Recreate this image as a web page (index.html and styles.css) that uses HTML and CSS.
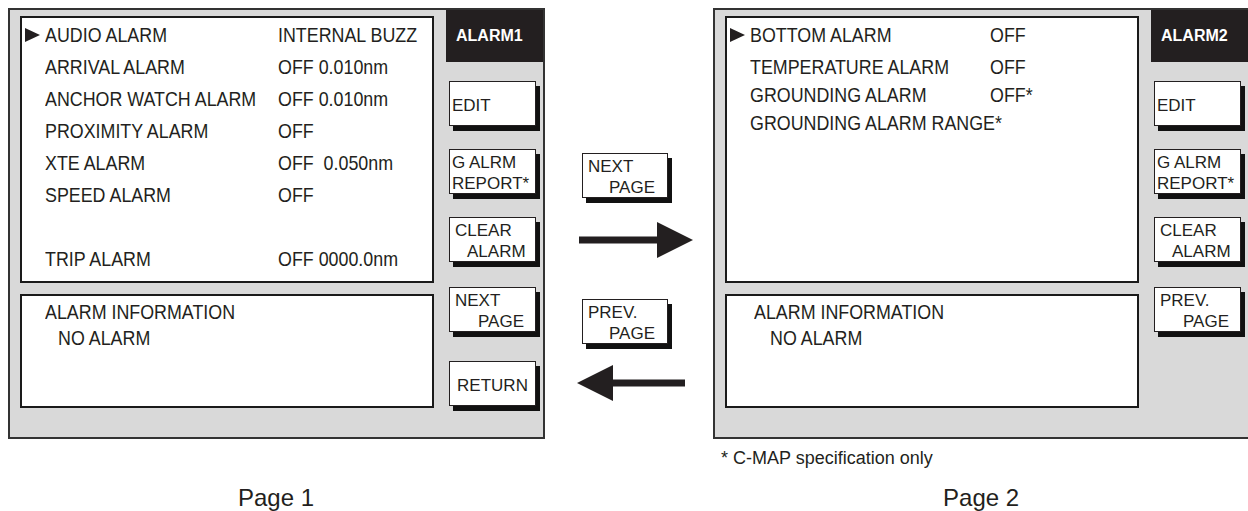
FILE: index.html
```html
<!DOCTYPE html>
<html lang="en">
  <head>
    <meta charset="UTF-8" />
    <title>Alarm menu</title>
    <link rel="stylesheet" href="styles.css">
  </head>
  <body>
    <div class="top">
      <!-- page 1 -->
      <div class="screen">
        <div class="panels">
          <div class="panel list">
            <div class="row"><span class="mark"><svg width="15" height="14" viewBox="0 0 15 14"><polygon points="0,0 15,7 0,14" fill="#231f20"/></svg></span><span class="label">AUDIO ALARM</span><span class="value">INTERNAL BUZZ</span></div>
            <div class="row"><span class="mark"></span><span class="label">ARRIVAL ALARM</span><span class="value">OFF 0.010nm</span></div>
            <div class="row"><span class="mark"></span><span class="label">ANCHOR WATCH ALARM</span><span class="value">OFF 0.010nm</span></div>
            <div class="row"><span class="mark"></span><span class="label">PROXIMITY ALARM</span><span class="value">OFF</span></div>
            <div class="row"><span class="mark"></span><span class="label">XTE ALARM</span><span class="value">OFF  0.050nm</span></div>
            <div class="row"><span class="mark"></span><span class="label">SPEED ALARM</span><span class="value">OFF</span></div>
            <div class="row"></div>
            <div class="row"><span class="mark"></span><span class="label">TRIP ALARM</span><span class="value">OFF 0000.0nm</span></div>
          </div>
          <div class="panel info">
            <div class="info-title"><span class="txt">ALARM INFORMATION</span></div>
            <div class="info-text"><span class="txt">NO ALARM</span></div>
          </div>
        </div>
        <div class="side">
          <div class="tab">ALARM1</div>
          <div class="key key-single key-first">EDIT</div>
          <div class="key">G ALRM<br>REPORT*</div>
          <div class="key key-pad">CLEAR<br><span class="ind-s">ALARM</span></div>
          <div class="key key-pad key-next">NEXT<br><span class="ind-l">PAGE</span></div>
          <div class="key key-single key-center key-return">RETURN</div>
        </div>
      </div>

      <!-- arrows between pages -->
      <div class="middle">
        <div class="key key-pad">NEXT<br><span class="ind-m">PAGE</span></div>
        <svg class="arrow-right" width="115" height="36" viewBox="0 0 115 36">
          <rect x="0" y="14.5" width="80" height="7" fill="#231f20"/>
          <polygon points="78,0 114,18 78,36" fill="#231f20"/>
        </svg>
        <div class="key key-pad key-prev">PREV.<br><span class="ind-m">PAGE</span></div>
        <svg class="arrow-left" width="110" height="36" viewBox="0 0 110 36">
          <polygon points="0,18 36,0 36,36" fill="#231f20"/>
          <rect x="34" y="14.5" width="74" height="7" fill="#231f20"/>
        </svg>
      </div>

      <!-- page 2 -->
      <div class="page2">
        <div class="screen screen-cut">
          <div class="panels">
            <div class="panel list list-tight">
              <div class="row row-first"><span class="mark"><svg width="15" height="14" viewBox="0 0 15 14"><polygon points="0,0 15,7 0,14" fill="#231f20"/></svg></span><span class="label">BOTTOM ALARM</span><span class="value">OFF</span></div>
              <div class="row"><span class="mark"></span><span class="label">TEMPERATURE ALARM</span><span class="value">OFF</span></div>
              <div class="row"><span class="mark"></span><span class="label">GROUNDING ALARM</span><span class="value">OFF*</span></div>
              <div class="row"><span class="mark"></span><span class="label">GROUNDING ALARM RANGE*</span></div>
            </div>
            <div class="panel info info-wide">
              <div class="info-title"><span class="txt">ALARM INFORMATION</span></div>
              <div class="info-text"><span class="txt">NO ALARM</span></div>
            </div>
          </div>
          <div class="side">
            <div class="tab">ALARM2</div>
            <div class="key key-single key-first">EDIT</div>
            <div class="key">G ALRM<br>REPORT*</div>
            <div class="key key-pad">CLEAR<br><span class="ind-s">ALARM</span></div>
            <div class="key key-pad key-next">PREV.<br><span class="ind-l">PAGE</span></div>
          </div>
        </div>
        <div class="note">* C-MAP specification only</div>
      </div>
    </div>

    <div class="captions">
      <div class="caption caption-1">Page 1</div>
      <div class="caption caption-2">Page 2</div>
    </div>
  </body>
</html>
```

FILE: styles.css
```css
body {
  margin: 0;
  background: #fff;
  color: #231f20;
  font-family: "Liberation Sans", Arial, sans-serif;
  overflow: hidden;
  width: 1248px;
  height: 511px;
}

.top {
  display: flex;
  align-items: flex-start;
  padding: 8px 0 0 8px;
}

.screen {
  width: 537px;
  height: 431px;
  box-sizing: border-box;
  border: 2px solid #333;
  background: #d9d9d9;
  display: flex;
  flex-shrink: 0;
}

.screen-cut {
  width: 535px;
  border-right: none;
}

.panels {
  width: 414px;
  padding: 6px 0 0 10px;
  margin-right: 12px;
  flex-shrink: 0;
}

.panel {
  background: #fff;
  border: 2px solid #1a1a1a;
  box-sizing: border-box;
  font-size: 21px;
}

/* the screen font is a condensed sans: squeeze Arial-width text */
.label,
.value,
.txt {
  display: inline-block;
  transform: scaleX(0.85);
  transform-origin: left center;
  white-space: pre;
}

.list {
  height: 267px;
  padding-top: 1px;
}

.row {
  display: flex;
  height: 32px;
  line-height: 32px;
}

.mark {
  width: 23px;
  flex-shrink: 0;
  display: flex;
  align-items: center;
  padding-left: 3px;
  box-sizing: border-box;
}

.label {
  width: 233px;
  flex-shrink: 0;
}

.list-tight {
  padding-top: 3px;
}

.list-tight .row {
  height: 28px;
  line-height: 28px;
}

.list-tight .row-first {
  margin-bottom: 4px;
}

.list-tight .label {
  width: 240px;
}

.info {
  margin-top: 11px;
  height: 114px;
  padding: 3px 0 0 23px;
  line-height: 26px;
}

.info-wide {
  padding-left: 27px;
}

.info-text {
  padding-left: 13px;
}

.info-wide .info-text {
  padding-left: 16px;
}

.side {
  flex: 1;
  display: flex;
  flex-direction: column;
}

.tab {
  height: 52px;
  background: #231f20;
  color: #fff;
  font-weight: bold;
  font-size: 16px;
  line-height: 52px;
  padding-left: 10px;
}

.key {
  width: 87px;
  height: 45px;
  box-sizing: border-box;
  background: #fff;
  border: 1px solid #231f20;
  box-shadow: 4px 5px 0 #111;
  font-size: 17px;
  line-height: 21px;
  padding: 2px 0 0 2px;
  margin: 23px 0 0 3px;
  white-space: nowrap;
}

.key-pad {
  padding-left: 5px;
}

.key-first {
  margin-top: 19px;
}

.key-next {
  margin-top: 25px;
}

.key-return {
  margin-top: 29px;
}

.key-single {
  line-height: 45px;
  padding-top: 1px;
}

.key-center {
  text-align: center;
  padding-left: 0;
}

.ind-s {
  padding-left: 12px;
}

.ind-m {
  padding-left: 21px;
}

.ind-l {
  padding-left: 23px;
}

.middle {
  width: 168px;
  flex-shrink: 0;
  display: flex;
  flex-direction: column;
  padding: 145px 0 0 37px;
  box-sizing: border-box;
}

.middle .key {
  width: 86px;
  margin: 0;
}

.middle .key-prev {
  margin-top: 41px;
}

.arrow-right {
  display: block;
  margin: 24px 0 0 -3px;
}

.arrow-left {
  display: block;
  margin: 21px 0 0 -5px;
}

.page2 {
  flex-shrink: 0;
}

.note {
  margin: 9px 0 0 8px;
  font-size: 18px;
  line-height: 20px;
}

.captions {
  display: flex;
  margin-top: 16px;
}

.caption {
  font-size: 24px;
  line-height: 28px;
}

.caption-1 {
  margin-left: 238px;
}

.caption-2 {
  margin-left: 629px;
}
```
